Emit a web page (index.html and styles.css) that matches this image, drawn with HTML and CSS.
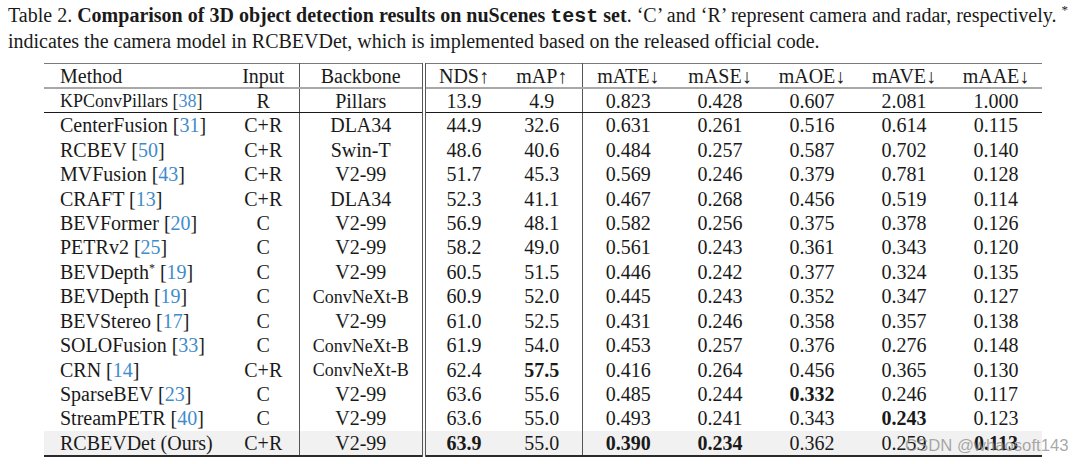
FILE: index.html
```html
<!DOCTYPE html>
<html>
<head>
<meta charset="utf-8">
<link rel="stylesheet" href="styles.css">
</head>
<body>
<div class="page">
  <div class="caption">
    <div class="line1">Table 2. <b>Comparison of 3D object detection results on nuScenes <span class="mono">test</span> set</b>. ‘C’ and ‘R’ represent camera and radar, respectively. <sup class="star">*</sup></div>
    <div class="line2">indicates the camera model in RCBEVDet, which is implemented based on the released official code.</div>
  </div>
  <table class="results">
    <colgroup>
      <col class="c-method"><col class="c-input"><col class="c-backbone"><col class="c-nds"><col class="c-map"><col class="c-err"><col class="c-err"><col class="c-err"><col class="c-err"><col class="c-err">
    </colgroup>
    <thead>
      <tr class="head">
        <th class="m">Method</th><th class="vr">Input</th><th class="dbl">Backbone</th><th>NDS↑</th><th class="vr">mAP↑</th><th>mATE↓</th><th>mASE↓</th><th>mAOE↓</th><th>mAVE↓</th><th>mAAE↓</th>
      </tr>
    </thead>
    <tbody>
      <tr class="radar">
        <td class="m"><span class="sm">KPConvPillars [<span class="ref">38</span>]</span></td><td class="vr">R</td><td class="dbl">Pillars</td><td>13.9</td><td class="vr">4.9</td><td>0.823</td><td>0.428</td><td>0.607</td><td>2.081</td><td>1.000</td>
      </tr>
      <tr>
        <td class="m">CenterFusion [<span class="ref">31</span>]</td><td class="vr">C+R</td><td class="dbl">DLA34</td><td>44.9</td><td class="vr">32.6</td><td>0.631</td><td>0.261</td><td>0.516</td><td>0.614</td><td>0.115</td>
      </tr>
      <tr>
        <td class="m">RCBEV [<span class="ref">50</span>]</td><td class="vr">C+R</td><td class="dbl">Swin-T</td><td>48.6</td><td class="vr">40.6</td><td>0.484</td><td>0.257</td><td>0.587</td><td>0.702</td><td>0.140</td>
      </tr>
      <tr>
        <td class="m">MVFusion [<span class="ref">43</span>]</td><td class="vr">C+R</td><td class="dbl">V2-99</td><td>51.7</td><td class="vr">45.3</td><td>0.569</td><td>0.246</td><td>0.379</td><td>0.781</td><td>0.128</td>
      </tr>
      <tr>
        <td class="m">CRAFT [<span class="ref">13</span>]</td><td class="vr">C+R</td><td class="dbl">DLA34</td><td>52.3</td><td class="vr">41.1</td><td>0.467</td><td>0.268</td><td>0.456</td><td>0.519</td><td>0.114</td>
      </tr>
      <tr>
        <td class="m">BEVFormer [<span class="ref">20</span>]</td><td class="vr">C</td><td class="dbl">V2-99</td><td>56.9</td><td class="vr">48.1</td><td>0.582</td><td>0.256</td><td>0.375</td><td>0.378</td><td>0.126</td>
      </tr>
      <tr>
        <td class="m">PETRv2 [<span class="ref">25</span>]</td><td class="vr">C</td><td class="dbl">V2-99</td><td>58.2</td><td class="vr">49.0</td><td>0.561</td><td>0.243</td><td>0.361</td><td>0.343</td><td>0.120</td>
      </tr>
      <tr>
        <td class="m">BEVDepth<sup class="ast">*</sup> [<span class="ref">19</span>]</td><td class="vr">C</td><td class="dbl">V2-99</td><td>60.5</td><td class="vr">51.5</td><td>0.446</td><td>0.242</td><td>0.377</td><td>0.324</td><td>0.135</td>
      </tr>
      <tr>
        <td class="m">BEVDepth [<span class="ref">19</span>]</td><td class="vr">C</td><td class="dbl"><span class="sm">ConvNeXt-B</span></td><td>60.9</td><td class="vr">52.0</td><td>0.445</td><td>0.243</td><td>0.352</td><td>0.347</td><td>0.127</td>
      </tr>
      <tr>
        <td class="m">BEVStereo [<span class="ref">17</span>]</td><td class="vr">C</td><td class="dbl">V2-99</td><td>61.0</td><td class="vr">52.5</td><td>0.431</td><td>0.246</td><td>0.358</td><td>0.357</td><td>0.138</td>
      </tr>
      <tr>
        <td class="m">SOLOFusion [<span class="ref">33</span>]</td><td class="vr">C</td><td class="dbl"><span class="sm">ConvNeXt-B</span></td><td>61.9</td><td class="vr">54.0</td><td>0.453</td><td>0.257</td><td>0.376</td><td>0.276</td><td>0.148</td>
      </tr>
      <tr>
        <td class="m">CRN [<span class="ref">14</span>]</td><td class="vr">C+R</td><td class="dbl"><span class="sm">ConvNeXt-B</span></td><td>62.4</td><td class="vr"><b>57.5</b></td><td>0.416</td><td>0.264</td><td>0.456</td><td>0.365</td><td>0.130</td>
      </tr>
      <tr>
        <td class="m">SparseBEV [<span class="ref">23</span>]</td><td class="vr">C</td><td class="dbl">V2-99</td><td>63.6</td><td class="vr">55.6</td><td>0.485</td><td>0.244</td><td><b>0.332</b></td><td>0.246</td><td>0.117</td>
      </tr>
      <tr>
        <td class="m">StreamPETR [<span class="ref">40</span>]</td><td class="vr">C</td><td class="dbl">V2-99</td><td>63.6</td><td class="vr">55.0</td><td>0.493</td><td>0.241</td><td>0.343</td><td><b>0.243</b></td><td>0.123</td>
      </tr>
      <tr class="ours">
        <td class="m">RCBEVDet (Ours)</td><td class="vr">C+R</td><td class="dbl">V2-99</td><td><b>63.9</b></td><td class="vr">55.0</td><td><b>0.390</b></td><td><b>0.234</b></td><td>0.362</td><td>0.259</td><td><b>0.113</b></td>
      </tr>
    </tbody>
  </table>
  <div class="watermark">CSDN @whaosoft143</div>
</div>
</body>
</html>
```
FILE: styles.css
```css
html, body {
  margin: 0;
  padding: 0;
  background: #ffffff;
}

.page {
  position: relative;
  width: 1080px;
  height: 464px;
  overflow: hidden;
  font-family: "Liberation Serif", "Times New Roman", serif;
  color: #1a1a1a;
}

.caption {
  padding: 3px 12px 0 8px;
  font-size: 20px;
  line-height: 25px;
}

.line1 {
  text-align: justify;
  text-align-last: justify;
}

.mono {
  font-family: "Liberation Mono", "Courier New", monospace;
  font-weight: bold;
}

.star {
  font-size: 13px;
  line-height: 0;
  vertical-align: 8px;
}

.results {
  margin: 9px 0 0 44px;
  width: 998px;
  table-layout: fixed;
  border-collapse: collapse;
  font-size: 20px;
  border-top: 1.5px solid #7a7a7a;
  border-bottom: 2px solid #2a2a2a;
}

.c-method { width: 184px; }
.c-input { width: 71px; }
.c-backbone { width: 125px; }
.c-nds { width: 78px; }
.c-map { width: 80px; }
.c-err { width: 92px; }

.results th,
.results td {
  padding: 0;
  text-align: center;
  vertical-align: middle;
  font-weight: normal;
  white-space: nowrap;
  line-height: 22px;
}

.results .m {
  text-align: left;
  padding-left: 16px;
}

.results .vr {
  border-right: 1px solid #555555;
}

.results .dbl {
  border-right: 4px double #555555;
}

.head th {
  height: 23px;
  border-bottom: 2px solid #a8a8a8;
}

.results tbody tr td {
  height: 24.45px;
}

.results tbody tr.radar td {
  height: 23px;
  border-bottom: 1.5px solid #1a1a1a;
}

.ours td {
  background: #f1f1f1;
}

.results b {
  font-weight: bold;
}

.sm {
  font-size: 18px;
}

.ref {
  color: #3f8ccc;
}

.ast {
  font-size: 12px;
  line-height: 0;
  vertical-align: 7px;
}

.watermark {
  position: absolute;
  left: 905px;
  top: 436px;
  white-space: nowrap;
  font-family: "Liberation Sans", Arial, sans-serif;
  font-size: 16.7px;
  color: rgba(140, 140, 140, 0.75);
}
```
